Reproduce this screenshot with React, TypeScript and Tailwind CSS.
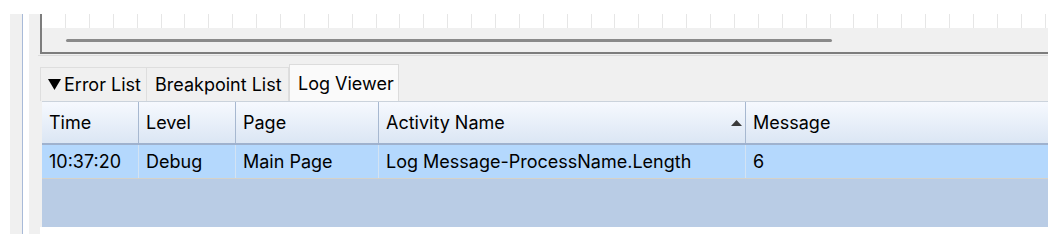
const font = { fontFamily: "Inter, 'Noto Sans', sans-serif" };

const columns = [
  { key: "time", label: "Time", width: "w-[97px]" },
  { key: "level", label: "Level", width: "w-[97px]" },
  { key: "page", label: "Page", width: "w-[143px]" },
  { key: "activity", label: "Activity Name", width: "w-[367px]", sorted: true },
  { key: "message", label: "Message", width: "flex-1" },
];

const row: Record<string, string> = {
  time: "10:37:20",
  level: "Debug",
  page: "Main Page",
  activity: "Log Message-ProcessName.Length",
  message: "6",
};

function Ruler() {
  return (
    <div className="h-[40px] shrink-0 flex flex-col border-l-2 border-b-2 border-[#7d7d7d]">
      {/* tick strip */}
      <div className="h-[14px] bg-white flex pl-[23px] overflow-hidden">
        {Array.from({ length: 42 }).map((_, i) => (
          <div key={i} className="w-[23.9px] shrink-0 h-full border-l border-[#e6e6e6]" />
        ))}
      </div>
      {/* horizontal scrollbar */}
      <div className="flex-1 bg-[#f0f0f0] flex items-center pl-[24px]">
        <div className="w-[766px] h-[3px] rounded-full bg-[#8a8a8a]" />
      </div>
    </div>
  );
}

function Tabs() {
  return (
    <div className="flex items-end h-[37px] shrink-0 text-[18px] text-black">
      <div className="h-[34px] w-[107px] flex items-center gap-[3px] pl-[7px] bg-[#f0f0f0] border border-b-0 border-[#dedede]">
        <svg width="13" height="11" viewBox="0 0 13 11">
          <polygon points="0,0 13,0 6.5,11" fill="#000" />
        </svg>
        <span>Error List</span>
      </div>
      <div className="h-[34px] w-[142px] flex items-center pl-[8px] bg-[#f0f0f0] border-r border-t border-[#dedede]">
        Breakpoint List
      </div>
      <div className="h-[37px] w-[110px] flex items-center pl-[8px] bg-[#fafafa] border border-b-0 border-[#dcdcdc]">
        Log Viewer
      </div>
    </div>
  );
}

function Grid() {
  return (
    <div className="h-[126px] shrink-0 ml-[2px] flex flex-col border-t border-[#cbd3dc] text-[18px] text-black">
      <div className="h-[43px] flex bg-gradient-to-b from-[#f6f9fe] to-[#dbe6f4] border-b-2 border-[#9fb2ce]">
        {columns.map((c, i) => (
          <div
            key={c.key}
            className={`${c.width} flex items-center pl-[7px] ${i < columns.length - 1 ? "border-r border-[#a7b8d0]" : ""}`}
          >
            {c.sorted ? (
              <div className="flex-1 flex items-center justify-between pr-[3px]">
                <span>{c.label}</span>
                <svg width="11" height="6" viewBox="0 0 11 6">
                  <polygon points="0,6 11,6 5.5,0" fill="#3a3a3a" />
                </svg>
              </div>
            ) : (
              <span>{c.label}</span>
            )}
          </div>
        ))}
      </div>
      <div className="h-[34px] flex bg-[#b4d8fd] border-b border-[#d6d2c8]">
        {columns.map((c, i) => (
          <div
            key={c.key}
            className={`${c.width} flex items-center pl-[7px] ${i < columns.length - 1 ? "border-r border-[#d3e3f3]" : ""}`}
          >
            {row[c.key]}
          </div>
        ))}
      </div>
      <div className="flex-1 bg-[#b9cce5]" />
    </div>
  );
}

export default function App() {
  return (
    <div className="w-[1058px] h-[234px] bg-white flex flex-col overflow-hidden" style={font}>
      <div className="h-[14px] shrink-0" />
      <div className="flex-1 flex">
        <div className="w-[10px]" />
        <div className="w-[12px] bg-[#f0f0f0]" />
        <div className="w-[1px] bg-[#a8bad8]" />
        <div className="w-[6px]" />
        <div className="w-[1019px] bg-[#f0f0f0] flex flex-col pl-[11px]">
          <Ruler />
          <div className="h-[1px] shrink-0" />
          <div className="h-[1px] shrink-0 bg-[#dadada] -ml-[2px]" />
          <div className="h-[8px] shrink-0" />
          <Tabs />
          <Grid />
          <div className="flex-1 bg-white" />
        </div>
      </div>
    </div>
  );
}
